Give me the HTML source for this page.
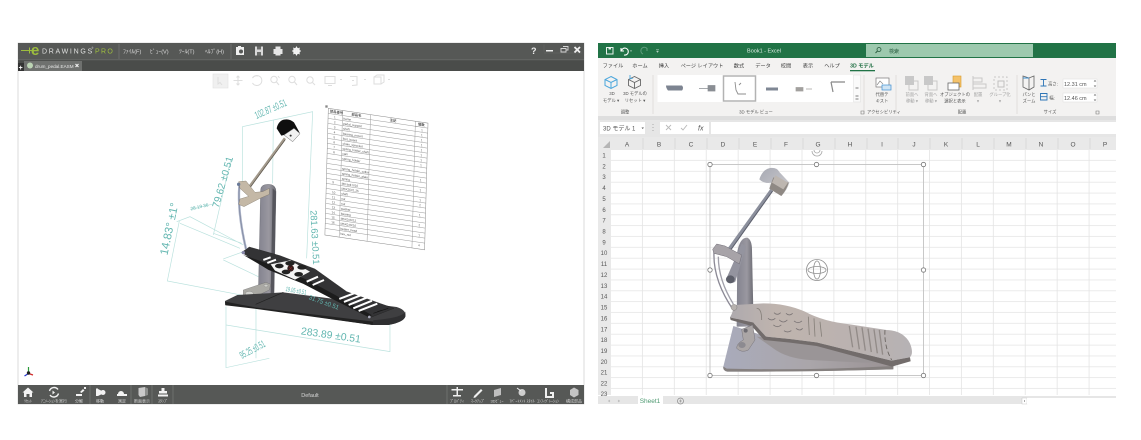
<!DOCTYPE html>
<html lang="ja"><head><meta charset="utf-8"><title>eDrawings and Excel</title>
<style>
html,body{margin:0;padding:0;background:#fff;width:1141px;height:440px;overflow:hidden}
svg{display:block;filter:blur(.3px)}
text{font-family:"Liberation Sans","Noto Sans CJK JP",sans-serif}
</style></head><body>
<svg width="1141" height="440" viewBox="0 0 1141 440" xmlns="http://www.w3.org/2000/svg">
<defs>
<linearGradient id="pd" x1="0" y1="0" x2="1" y2="0"><stop offset="0" stop-color="#aeaaae"/><stop offset=".25" stop-color="#bfb4ae"/><stop offset=".7" stop-color="#bab2b0"/><stop offset="1" stop-color="#b6b2b4"/></linearGradient>
<linearGradient id="bs" x1="0" y1="0" x2="1" y2="0"><stop offset="0" stop-color="#a9abbb"/><stop offset=".5" stop-color="#aaa6aa"/><stop offset="1" stop-color="#9a9294"/></linearGradient>
<linearGradient id="post" x1="0" y1="0" x2="1" y2="0"><stop offset="0" stop-color="#83838f"/><stop offset=".6" stop-color="#9a98a0"/><stop offset="1" stop-color="#6a6a72"/></linearGradient>
<linearGradient id="head" x1="0" y1="0" x2="1" y2="1"><stop offset="0" stop-color="#a7a9b3"/><stop offset="1" stop-color="#d0cfd2"/></linearGradient>
<pattern id="grid" x="611" y="150" width="31.9" height="10.86" patternUnits="userSpaceOnUse"><rect width="31.9" height="10.86" fill="#fff"/><path d="M31.5 0V10.86M0 10.5H31.9" stroke="#e4e4e4" stroke-width=".8" fill="none"/></pattern>
</defs>
<rect width="1141" height="440" fill="#fff"/>

<!-- LEFT WINDOW -->
<rect x="18" y="43" width="566" height="361" fill="#fff" stroke="#c4c4c4" stroke-width=".6"/>
<rect x="18" y="43" width="566" height="17" fill="#565856"/>
<rect x="18" y="60" width="566" height="11" fill="#4a4c4a"/>
<rect x="18" y="59.5" width="566" height=".7" fill="#6d6f6d"/>
<path d="M21 50.5H32M29.5 47.5V53.5" stroke="#9dbd3e" stroke-width="1" fill="none"/>
<text x="31" y="55" font-size="15" fill="#9dbd3e" font-weight="bold">e</text>
<text x="42" y="53.5" font-size="7" fill="#dfe0df" letter-spacing="1.7">DRAWINGS</text>
<text x="91.500" y="49" font-size="2.500" fill="#dfe0df">®</text>
<text x="95" y="53.5" font-size="7" fill="#9dbd3e" letter-spacing="1.300">PRO</text>
<path d="M119 44V59M231 44V59" stroke="#727472" stroke-width=".8"/>
<g font-size="5.600" fill="#dcdcdc">
<text x="123" y="53.5">ﾌｧｲﾙ(F)</text><text x="150" y="53.5">ﾋﾞｭｰ(V)</text><text x="179" y="53.5">ﾂｰﾙ(T)</text><text x="205" y="53.5">ﾍﾙﾌﾟ(H)</text>
</g>
<path d="M236 47H244V55H236Z M238 46H241V48H238Z" fill="#f0f0f0"/><circle cx="241" cy="51.5" r="2" fill="#565856"/>
<path d="M255 46.5H263V55.5H255Z" fill="#d8d8d8"/><path d="M257 46.5H261V49.5H257ZM257 52H261V55.5H257Z" fill="#6b6d6b"/>
<path d="M275.5 46.5H280.5V49H282.5V54H280.5V55.5H275.5V54H273.5V49H275.5Z" fill="#e6e6e6"/>
<circle cx="296.5" cy="51" r="3.5" fill="#f2f2f2"/><circle cx="296.5" cy="51" r="1.4" fill="#565856"/>
<path d="M296.5 46.5V55.5M292 51H301M293.3 47.8L299.7 54.2M299.7 47.8L293.3 54.2" stroke="#f2f2f2" stroke-width="1"/>
<text x="531" y="54" font-size="9" font-weight="bold" fill="#eee">?</text>
<path d="M544 44.5V51.5M544 53H582" stroke="#6d6f6d" stroke-width=".4" fill="none"/>
<rect x="546" y="50" width="7" height="1.5" fill="#eee"/>
<path d="M561 48.5H566V52H561ZM563 46.5H568V50H566" fill="none" stroke="#d5d5d5" stroke-width=".9"/>
<path d="M574.5 47L580 52.5M580 47L574.5 52.5" stroke="#f0f0f0" stroke-width="1.8"/>
<rect x="18" y="63" width="6" height="8" fill="#333"/>
<text x="18.6" y="70" font-size="7" font-weight="bold" fill="#fff">+</text>
<rect x="24" y="61" width="58" height="10" fill="#6f716f"/>
<circle cx="30" cy="65.5" r="3" fill="#bcd4b4"/>
<text x="35" y="68" font-size="4.600" fill="#e8e8e8">drum_pedal.EASM</text>
<path d="M75.500 64L78.500 67M78.500 64L75.500 67" stroke="#f2f2f2" stroke-width="1.100"/>

<!-- view toolbar -->
<rect x="213" y="74" width="15" height="14" fill="#f0f0f0" stroke="#e2e2e2" stroke-width=".6"/>
<g fill="none" stroke="#dedede" stroke-width="1">
<path d="M218 77L218 84L220 82.5L222 85"/>
<path d="M238 76V85M233.500 80.500H242.500M236.500 77.500L238 76L239.500 77.500M236.500 83.500L238 85L239.500 83.500"/>
<path d="M252.500 78A5 5 0 1 1 252.500 83"/><path d="M258 76A5 5 0 0 0 252.500 78"/>
<circle cx="274" cy="79.500" r="3.200"/><path d="M276.500 82L279 85M278 76L279.500 78"/>
<circle cx="292" cy="79.500" r="3.200"/><path d="M294.500 82L297 85"/>
<circle cx="310" cy="80" r="3.200"/><path d="M312.500 82.500L315 85"/>
<path d="M325 76.500H335V83.500H325ZM328 85.500H332"/><path d="M340 79.500H342"/>
<path d="M350 76.500H357V85L352 85.500M352 80.500H354"/><path d="M364 79.500H366"/>
<path d="M374 77H381V84H374ZM374 77L377 75H384V82L381 84"/><path d="M388 79.500H390"/>
</g>

<!-- Left drawing in zoom coordinates -->
<g transform="translate(140 95) scale(.3333)">
 <g stroke="#b9e1dd" stroke-width="2" fill="none">
  <path d="M307 95L518 50L500 490M307 95V275M400 75L398 265"/>
  <path d="M258 635V690L750 770V680M258 690L258 818L388 790M348 640V790"/>
  <path d="M220 420L272 195M110 380L150 365L310 450M120 385L300 460M118 378L82 558L330 605M250 492L310 470M220 415L305 445M250 495L355 545"/>
  <path d="M150 343L228 325"/>
 </g>
 <path d="M362 285Q362 268 385 268Q408 268 408 290L402 600H355Z" fill="url(#post)" stroke="#55555c" stroke-width="1"/>
 <path d="M398 280L408 290L402 600H392Z" fill="#56565d"/>
 <path d="M310 585L378 562L392 568L388 585L335 610Q318 612 310 600Z" fill="#aaa9a4" stroke="#666" stroke-width="1"/>
 <ellipse cx="328" cy="596" rx="12" ry="7" fill="#d2d2ce" stroke="#777"/><ellipse cx="378" cy="572" rx="6" ry="4" fill="#cfcfca" stroke="#777"/>
 <path d="M255 618L292 600L430 592L770 636Q800 645 796 665Q790 682 745 690L698 690L350 640L256 630Z" fill="#3f3f41"/>
 <path d="M255 620L350 638L700 680L698 690L350 642L256 631Z" fill="#222"/>
 <path d="M700 676Q790 668 796 650V665Q790 682 745 690H698Z" fill="#2f2f31"/>
 <path d="M347 628L430 592" stroke="#222" stroke-width="2"/>
 <!-- footboard -->
 <path d="M305 472L328 456L420 482L525 522L620 590L762 640L690 668L590 618L490 566L385 524Z" fill="#333335" stroke="#1d1d1d" stroke-width="1"/>
 <path d="M310 480L385 524L490 566L590 618L690 668L695 660L600 608L505 556L400 512Z" fill="#1c1c1c"/>
 <g stroke="#fff" stroke-width="6" fill="none">
  <path d="M370 495L392 487M382 504L408 494M500 560L534 545M518 570L552 555"/>
  <path d="M598 612L650 592M612 621L665 600M626 630L680 608M640 640L696 617M656 648L712 626"/>
 </g>
 <path d="M392 508L450 496L510 530L465 554L405 527Z" fill="#f4f4f4"/>
 <g fill="#222"><ellipse cx="418" cy="513" rx="13" ry="7"/><ellipse cx="450" cy="505" rx="14" ry="7"/><ellipse cx="486" cy="517" rx="14" ry="7"/><ellipse cx="476" cy="538" rx="13" ry="7"/><ellipse cx="438" cy="531" rx="13" ry="7"/></g>
 <circle cx="452" cy="520" r="10" fill="#2e1c1c"/><path d="M446 514L458 526M458 514L446 526" stroke="#a22" stroke-width="1.500"/>
 <path d="M700 655L745 640M712 650L725 646" stroke="#151515" stroke-width="2"/>
 <circle cx="310" cy="473" r="5" fill="#88a"/><circle cx="688" cy="666" r="4" fill="#aab"/>
 <path d="M298 272Q292 350 318 462" stroke="#a9b1c6" stroke-width="7" fill="none"/><path d="M298 272Q292 350 318 462" stroke="#6f7690" stroke-width="1.500" fill="none"/>
 <path d="M325 280L435 130" stroke="#a39a8c" stroke-width="8"/><path d="M325 285L435 135" stroke="#5b554c" stroke-width="2"/>
 <path d="M296 260L318 258L345 292L368 290L388 280V298L360 310L312 335L296 328L300 312L326 304L300 280Z" fill="#c4b8a6" stroke="#6f6657" stroke-width="1"/>
 <circle cx="296" cy="268" r="5" fill="#6a7a98"/>
 <!-- beater -->
 <path d="M410 100Q415 78 432 74Q448 70 462 82L480 115L462 100L432 120L424 122Z" fill="#0f0f0f"/>
 <path d="M432 120L462 100L480 116L458 140Z" fill="#f2f2f2" stroke="#666" stroke-width="1.500"/>
 <circle cx="452" cy="122" r="3" fill="#333"/>
 <g fill="#62b6b0">
  <text transform="translate(350 72) rotate(-24) scale(.56 1)" font-size="31">102.87 ±0.51</text>
  <text transform="translate(236 340) rotate(-74)" font-size="30">79.62 ±0.51</text>
  <text transform="translate(82 482) rotate(-78)" font-size="34">14.83° ±1°</text>
  <text transform="translate(482 718) rotate(8)" font-size="31">283.89 ±0.51</text>
  <text transform="translate(306 792) rotate(-28) scale(.5 1)" font-size="31">95.25 ±0.51</text>
  <text transform="translate(511 346) rotate(87)" font-size="28">281.63 ±0.51</text>
  <text transform="translate(153 346) rotate(-13)" font-size="14">28.19 36</text>
  <text transform="translate(436 588) rotate(10) scale(.6 1)" font-size="20">19.05 ±0.51</text>
  <text transform="translate(505 612) rotate(20) scale(.9 1)" font-size="20">31.75 ±0.51</text>
 </g>
 <g transform="matrix(.997 .148 -.027 1 565 40)">
  <rect x="0" y="0" width="300" height="380" fill="#fff" stroke="#8b8b8b" stroke-width="1.500"/>
  <path d="M0 15H300M0 30H300M0 45H300M0 60H300M0 75H300M0 90H300M0 105H300M0 120H300M0 135H300M0 150H300M0 165H300M0 180H300M0 195H300M0 210H300M0 225H300M0 240H300M0 255H300M0 270H300M0 285H300M0 300H300M0 315H300M0 330H300M0 345H300M0 360H300M43 0V380M127 0V380M262 0V380" stroke="#9a9a9a" stroke-width="1.500" fill="none"/>
  <g font-size="9" fill="#555">
   <text x="5" y="11" font-size="10" font-weight="bold">部品番号</text><text x="70" y="11" font-size="10" font-weight="bold">部品名</text><text x="185" y="11" font-size="10" font-weight="bold">注記</text><text x="270" y="11" font-size="10" font-weight="bold">個数</text>
   <text x="46" y="27">frame</text><text x="46" y="42">pedal_support</text><text x="46" y="57">shaft</text><text x="46" y="72">bearing_mount</text><text x="46" y="87">foot_board</text><text x="46" y="102">chain_sprocket</text><text x="46" y="117">spring_holder_shaft</text><text x="46" y="132">cam</text><text x="46" y="147">spring_holder</text><text x="46" y="177">spring_holder_collar</text><text x="46" y="192">spring_holder_plate</text><text x="46" y="207">spring</text><text x="46" y="222">M6 bolt 5/16</text><text x="46" y="237">M6X25X1.25</text><text x="46" y="252">shaft</text><text x="46" y="267">nut</text><text x="46" y="282">nut</text><text x="46" y="297">washer</text><text x="46" y="312">bearing</text><text x="46" y="327">M5X0.8X12</text><text x="46" y="342">M5X0.8X16</text><text x="46" y="357">beater_head</text><text x="46" y="372">hex_nut</text>
   <text x="18" y="27">1</text><text x="18" y="42">2</text><text x="18" y="57">3</text><text x="18" y="72">4</text><text x="18" y="87">5</text><text x="18" y="102">6</text><text x="18" y="117">7</text><text x="18" y="132">8</text><text x="18" y="222">9</text><text x="18" y="252">10</text><text x="18" y="267">11</text><text x="18" y="282">12</text><text x="18" y="297">13</text><text x="18" y="312">14</text><text x="18" y="327">15</text><text x="18" y="342">16</text>
   <text x="280" y="27">1</text><text x="280" y="42">1</text><text x="280" y="57">1</text><text x="280" y="72">1</text><text x="280" y="87">1</text><text x="280" y="102">1</text><text x="280" y="117">1</text><text x="280" y="132">1</text><text x="280" y="177">1</text><text x="280" y="207">1</text><text x="280" y="237">1</text><text x="280" y="252">2</text><text x="280" y="282">1</text><text x="280" y="312">2</text><text x="280" y="342">1</text><text x="280" y="372">4</text>
  </g>
 </g>
 <rect x="556" y="31" width="7" height="7" fill="#888"/>
</g>

<path d="M28.500 373.500V367" stroke="#2a9a3a" stroke-width="1.200"/><path d="M28.500 373.500L24.500 376" stroke="#2233cc" stroke-width="1.200"/><path d="M28.500 373.500L33 375" stroke="#d02a2a" stroke-width="1.200"/><circle cx="28.500" cy="373" r="1.700" fill="#222"/>

<!-- bottom bar -->
<rect x="18" y="385" width="566" height="19" fill="#565856"/>
<path d="M90 385V404M131 385V404M152 385V404M173 385V404M447 385V404" stroke="#777977" stroke-width=".7"/>
<g fill="#f2f2f2">
 <path d="M28 387.500L33.500 392.500H32V397H29.500V394H26.500V397H24V392.500H22.500Z"/>
 <path d="M52.500 390.500L55 392.500L52.500 394.500Z"/>
 <path d="M76 394H82V396H76ZM80 392L83 389L84.500 390.500L81.500 393Z M84 387H86V389H84Z"/>
 <path d="M96 388.500H98V396H96ZM98 389L102 391V394L98 396Z"/><circle cx="103" cy="392.500" r="2.500"/>
 <path d="M117 396H127V394H124A3 3 0 1 0 118 394L117 394Z"/>
 <path d="M138.500 388L145 387V396L140 397L138.500 395Z" fill="#c9c9c9"/><path d="M145 387L148 388.500V395L145 396Z" fill="#8d8f8d"/>
 <path d="M161.500 388H164.500V391H167V393.500H159V391H161.500ZM158 394.500H168V396.500H158Z"/>
</g>
<g fill="none" stroke="#f2f2f2" stroke-width="1.400"><path d="M49.500 391A4.800 4.800 0 0 1 58 389.500M58.500 393.500A4.800 4.800 0 0 1 50 395"/></g>
<g font-size="4" fill="#d5d5d5" text-anchor="middle">
 <text x="28" y="402.500">ﾘｾｯﾄ</text><text x="54" y="402.500">ｱﾆﾒｰｼｮﾝを実行</text><text x="79" y="402.500">分解</text><text x="100" y="402.500">移動</text><text x="122" y="402.500">測定</text><text x="142" y="402.500">断面表示</text><text x="163" y="402.500">ｽﾀﾝﾌﾟ</text>
 <text x="457" y="402.500">ﾌﾟﾛﾊﾟﾃｨ</text><text x="478" y="402.500">ﾏｰｸｱｯﾌﾟ</text><text x="497" y="402.500">3Dﾋﾞｭｰ</text><text x="522" y="402.500">ｱﾊﾟｰﾄﾒﾝﾄ ｽﾀｲﾙ</text><text x="548" y="402.500">ｺﾝﾌｨｸﾞﾚｰｼｮﾝ</text><text x="574" y="402.500">構成部品</text>
</g>
<text x="310" y="397" font-size="5.500" fill="#d8d8d8" text-anchor="middle">Default</text>
<g fill="#f0f0f0">
 <path d="M456.500 387H458V389H463V390.500H458V395H461V396.500H453V395H456.500V390.500H451.500V389H456.500Z"/>
 <path d="M474 396L481 389L482.500 390.500L475.500 397.500L473.500 398Z"/>
 <path d="M494 390L501 388V395L494 397Z" fill="#bfbfbf"/>
 <circle cx="522" cy="392.500" r="3.500" fill="#cfcfcf"/><path d="M517 388L521 391" stroke="#f0f0f0"/>
 <path d="M545 388H547V396H552V394H550V392H554V398H545Z"/>
 <path d="M570 390L574 387.500L578.500 390V395L574 397.500L570 395Z" fill="#c4c4c4"/>
</g>

<!-- EXCEL -->
<rect x="598" y="43" width="518" height="361" fill="#fff"/>
<rect x="598" y="43" width="518" height="15" fill="#217346"/>
<rect x="866" y="44" width="167" height="13" fill="#9dc9ae"/>
<rect x="606.500" y="47.500" width="6.500" height="6.500" fill="none" stroke="#e8f1ec" stroke-width="1"/><rect x="608.500" y="47.500" width="2.500" height="2" fill="#e8f1ec"/>
<path d="M621 48V51H624M621.500 50.500A3.500 3.500 0 1 1 624 55" fill="none" stroke="#fff" stroke-width="1.100"/>
<path d="M630 50.500L632 50.500L631 51.800Z" fill="#dce8e1"/>
<path d="M647 48V51M647 48.500A3.500 3.500 0 1 0 643 54" fill="none" stroke="#5e9c7b" stroke-width="1"/>
<path d="M656 49.500H659M656.500 51L657.500 52.500L658.500 51Z" fill="#b8d3c4" stroke="#b8d3c4" stroke-width=".5"/>
<text x="764" y="52.500" font-size="5.500" fill="#dfece5" text-anchor="middle">Book1  -  Excel</text>
<circle cx="879" cy="49.500" r="2" fill="none" stroke="#2a5d40" stroke-width=".8"/><path d="M877.500 51L875.500 53" stroke="#2a5d40"/>
<text x="889" y="53" font-size="5" fill="#2a5d40">検索</text>
<rect x="598" y="58" width="518" height="58" fill="#f3f2f1"/>
<g font-size="5.200" fill="#444" text-anchor="middle">
 <text x="613" y="67.500">ファイル</text><text x="640" y="67.500">ホーム</text><text x="664" y="67.500">挿入</text><text x="702" y="67.500">ページ レイアウト</text><text x="739" y="67.500">数式</text><text x="763" y="67.500">データ</text><text x="786" y="67.500">校閲</text><text x="808" y="67.500">表示</text><text x="832" y="67.500">ヘルプ</text>
 <text x="862" y="67.500" font-weight="bold" fill="#1e6e42">3D モデル</text>
</g>
<rect x="850" y="70" width="25" height="1.300" fill="#217346"/>
<path d="M611 76.500L617 79.500V85.500L611 88.500L605 85.500V79.500ZM605 79.500L611 82.500L617 79.500M611 82.500V88.500" fill="none" stroke="#4aa6dc" stroke-width="1"/>
<path d="M634.500 76.500L640.500 79.500V85.500L634.500 88.500L628.500 85.500V79.500ZM628.500 79.500L634.500 82.500L640.500 79.500M634.500 82.500V88.500" fill="none" stroke="#666" stroke-width=".9"/>
<path d="M630 75L630 79L633 78" fill="none" stroke="#4aa6dc" stroke-width=".9"/>
<g font-size="4.300" fill="#555" text-anchor="middle">
 <text x="612" y="95">3D</text><text x="611" y="102">モデル ▾</text><text x="635" y="95">3D モデルの</text><text x="635" y="102">リセット ▾</text>
 <text x="625" y="113.500">調整</text><text x="756" y="113.500">3D モデル ビュー</text><text x="884" y="113.500">アクセシビリティ</text><text x="962" y="113.500">配置</text><text x="1050" y="113.500">サイズ</text>
 <text x="882" y="96">代替テ</text><text x="882" y="102.500">キスト</text>
 <text x="912" y="96" fill="#a3a3a3">前面へ</text><text x="912" y="102.500" fill="#a3a3a3">移動 ▾</text>
 <text x="931" y="96" fill="#a3a3a3">背面へ</text><text x="931" y="102.500" fill="#a3a3a3">移動 ▾</text>
 <text x="955" y="96">オブジェクトの</text><text x="955" y="102.500">選択と表示</text>
 <text x="978" y="96" fill="#a3a3a3">配置</text><text x="978" y="102.500" fill="#a3a3a3">▾</text>
 <text x="1000" y="96" fill="#a3a3a3">グループ化</text><text x="1000" y="102.500" fill="#a3a3a3">▾</text>
 <text x="1029" y="96">パンと</text><text x="1029" y="102.500">ズーム</text>
 <text x="1053" y="85.500">高さ:</text><text x="1052" y="99.500">幅:</text>
</g>
<path d="M653 75V114M864 75V114M896 75V114M1017 75V114" stroke="#dcdad8" stroke-width=".8"/>
<rect x="657.500" y="75" width="196" height="27" fill="#fff"/>
<rect x="723.500" y="76" width="32" height="25" fill="#fff" stroke="#b3b3b3" stroke-width="1.500"/>
<path d="M666 85.500H682Q684 88 682 90.500H668Q666 88 666 85.500Z" fill="#7d8491"/>
<path d="M699 88.500H712M708 85.500H715V91H708Z" fill="#8a8e94" stroke="#8a8e94" stroke-width=".7"/>
<path d="M735 82L736 90L738 94H746M739 85L741 83" fill="none" stroke="#8c8c8c" stroke-width=".9"/>
<path d="M766 87.500H778V90.500H766Z" fill="#7f8794"/>
<path d="M796 87.500H803V91H796ZM806 89H812" fill="#a2a09e" stroke="#a2a09e" stroke-width=".7"/>
<path d="M831 82H845M831 82L833 92" fill="none" stroke="#888" stroke-width="1.200"/>
<rect x="853.500" y="75" width="7" height="27" fill="#fafafa" stroke="#ddd" stroke-width=".5"/>
<path d="M855.500 88H858.500M855.500 96H858.500M855.500 99H858.500" stroke="#555" stroke-width=".8"/>
<rect x="876" y="78" width="13" height="9" fill="#fff" stroke="#777" stroke-width=".7"/><rect x="882" y="85" width="9" height="5" fill="#cfe4f4" stroke="#3f8fd0" stroke-width=".7"/>
<path d="M877 85L880 81L883 84" fill="none" stroke="#888" stroke-width=".7"/>
<rect x="905" y="76" width="9" height="9" fill="#c8c8c8"/><rect x="909" y="81" width="9" height="9" fill="none" stroke="#c8c8c8"/>
<rect x="924" y="76" width="9" height="9" fill="#c8c8c8"/><rect x="928" y="81" width="9" height="9" fill="none" stroke="#c8c8c8"/>
<rect x="953" y="76" width="8" height="11" fill="#f4c26a" stroke="#d89a2c" stroke-width=".6"/><rect x="948" y="83" width="11" height="7" fill="#fff" stroke="#666" stroke-width=".8"/>
<path d="M973 76V90M973 78H982V82H973M973 84H986V88H973" fill="none" stroke="#c8c8c8"/>
<rect x="994" y="77" width="13" height="13" fill="none" stroke="#c8c8c8" stroke-dasharray="2 2"/><rect x="998" y="81" width="6" height="6" fill="none" stroke="#c0c0c0"/>
<path d="M1023 76L1029 78L1034 76V87L1029 90L1023 87ZM1029 78V90" fill="none" stroke="#666" stroke-width=".8"/><path d="M1023 78H1029" stroke="#3b8fd0"/>
<path d="M1040.500 79.500H1046.500M1040.500 86H1046.500M1043.500 79.500V86" fill="none" stroke="#2e75b6" stroke-width=".9"/>
<path d="M1040.500 93.500H1047V100H1040.500ZM1040.500 96.700H1047" fill="none" stroke="#2e75b6" stroke-width=".9"/>
<rect x="1063" y="79" width="34" height="9" fill="#fff" stroke="#ddd" stroke-width=".5"/><rect x="1063" y="93" width="34" height="9" fill="#fff" stroke="#ddd" stroke-width=".5"/>
<text x="1064" y="86" font-size="5.500" fill="#555">12.31 cm</text><text x="1064" y="100" font-size="5.500" fill="#555">12.46 cm</text>
<path d="M1094 81.500L1095 80.500L1096 81.500M1094 85.500L1095 86.500L1096 85.500M1094 95.500L1095 94.500L1096 95.500M1094 99.500L1095 100.500L1096 99.500" fill="none" stroke="#555" stroke-width=".6"/>
<g fill="none" stroke="#777" stroke-width=".6"><path d="M861 111H864V114H861ZM1096 111H1099V114H1096Z"/></g>
<rect x="598" y="116" width="518" height="4" fill="#dedede"/>
<rect x="598" y="120" width="518" height="17" fill="#e6e6e6"/>
<rect x="600" y="122" width="45" height="12" fill="#fff"/><text x="603" y="130.500" font-size="6" fill="#555">3D モデル 1</text><path d="M641.500 127.500H644L642.700 129Z" fill="#555"/>
<path d="M653 124V125M653 127V128M653 130V131" stroke="#aaa"/>
<rect x="660" y="122" width="49" height="12" fill="#fff"/>
<path d="M666 125L671 130M671 125L666 130" stroke="#b9b9b9" stroke-width=".9"/><path d="M681 128L683 130L687 125" fill="none" stroke="#b9b9b9" stroke-width=".9"/>
<text x="698" y="130.500" font-size="7" fill="#555" font-style="italic">fx</text>
<rect x="711" y="122" width="405" height="12" fill="#fff"/>
<rect x="598" y="137" width="518" height="13" fill="#e9e9e9"/>
<rect x="598" y="150" width="13" height="245" fill="#e9e9e9"/>
<rect x="611" y="150" width="505" height="245" fill="url(#grid)"/>
<path d="M603 148H610V141Z" fill="#b5b5b5"/>
<path d="M643 138V149M675 138V149M707 138V149M739 138V149M771 138V149M803 138V149M835 138V149M867 138V149M898 138V149M930 138V149M962 138V149M994 138V149M1026 138V149M1058 138V149M1090 138V149" stroke="#d2d2d2" stroke-width=".7"/>
<g font-size="6.500" fill="#555" text-anchor="middle">
 <text x="627" y="146.500">A</text><text x="659" y="146.500">B</text><text x="691" y="146.500">C</text><text x="723" y="146.500">D</text><text x="755" y="146.500">E</text><text x="786" y="146.500">F</text><text x="818" y="146.500">G</text><text x="850" y="146.500">H</text><text x="882" y="146.500">I</text><text x="914" y="146.500">J</text><text x="946" y="146.500">K</text><text x="978" y="146.500">L</text><text x="1009" y="146.500">M</text><text x="1041" y="146.500">N</text><text x="1073" y="146.500">O</text><text x="1105" y="146.500">P</text>
</g>
<g font-size="6" fill="#555" text-anchor="middle">
 <text x="604" y="157.500">1</text><text x="604" y="168.300">2</text><text x="604" y="179.200">3</text><text x="604" y="190">4</text><text x="604" y="200.900">5</text><text x="604" y="211.800">6</text><text x="604" y="222.600">7</text><text x="604" y="233.500">8</text><text x="604" y="244.400">9</text><text x="604" y="255.200">10</text><text x="604" y="266.100">11</text><text x="604" y="277">12</text><text x="604" y="287.800">13</text><text x="604" y="298.700">14</text><text x="604" y="309.500">15</text><text x="604" y="320.400">16</text><text x="604" y="331.300">17</text><text x="604" y="342.100">18</text><text x="604" y="353">19</text><text x="604" y="363.900">20</text><text x="604" y="374.700">21</text><text x="604" y="385.600">22</text><text x="604" y="396">23</text>
</g>
<rect x="710" y="164.500" width="213.500" height="211" fill="none" stroke="#c3c3c3" stroke-width=".9"/>
<g fill="#fff" stroke="#777" stroke-width=".8">
 <circle cx="710" cy="164.500" r="2.200"/><circle cx="816.500" cy="164.500" r="2.200"/><circle cx="923.500" cy="164.500" r="2.200"/><circle cx="710" cy="270" r="2.200"/><circle cx="923.500" cy="270" r="2.200"/><circle cx="710" cy="375.500" r="2.200"/><circle cx="816.500" cy="375.500" r="2.200"/><circle cx="923.500" cy="375.500" r="2.200"/>
</g>
<path d="M812 151A5 5 0 0 0 822 151M814 150A3 3 0 0 0 820 150" fill="none" stroke="#a7a7a7" stroke-width=".8"/>
<g fill="none" stroke="#8f8f8f" stroke-width=".8"><circle cx="817" cy="270" r="10.500"/><ellipse cx="817" cy="270" rx="9" ry="3.500"/><ellipse cx="817" cy="270" rx="3.500" ry="9"/></g>

<!-- excel pedal zoom coords -->
<g transform="translate(690 140) scale(.3333)">
 <path d="M142 335Q150 292 172 293Q186 300 186 330L191 560H140Z" fill="url(#post)"/>
 <path d="M140 345L155 310L168 320L136 425Q122 436 108 418Z" fill="#94949f"/>
 <ellipse cx="121" cy="418" rx="13" ry="12" fill="#5d5f6a"/>
 <path d="M130 558L230 590L610 668V688Q360 696 112 695Q98 692 100 680Z" fill="url(#bs)"/>
 <path d="M100 680Q98 692 112 695Q360 696 610 688V678Q360 692 110 686Z" fill="#85807f"/>
 <path d="M200 590L300 600L380 610L480 635L600 668H520L360 660Q290 655 250 625Z" fill="#9a9597"/>
 <path d="M125 522L135 495L220 490Q290 490 345 515Q400 545 480 553L590 570Q640 572 660 610Q672 640 660 652L605 662L480 632L380 607L300 597L228 590L190 548L120 532Z" fill="url(#pd)"/>
 <path d="M120 532L190 548L228 590L300 597L380 607L480 632L605 662L660 652L662 664L606 680L480 645L380 618L300 608L222 600L185 558L122 540Z" fill="#726c6b"/>
 <path d="M478 558L488 622M498 560L508 628M516 562L526 632M534 566L544 636M552 568L562 640M568 570L578 644" stroke="#928b88" stroke-width="4" fill="none"/>
 <path d="M585 570Q582 620 605 660" stroke="#66605c" stroke-width="2.500" stroke-dasharray="14 8" fill="none"/>
 <path d="M200 505Q215 505 215 540M355 530L358 585M372 535L375 590M390 545L395 590" stroke="#86807a" stroke-width="2.500" fill="none"/>
 <g fill="none" stroke="#7c7676" stroke-width="2.500"><path d="M252 518Q262 528 272 518M288 520Q298 530 308 520M234 535Q245 545 256 535M268 540Q280 552 292 540M312 543Q324 553 336 543M250 555Q262 565 274 555M282 572Q292 580 304 572M318 565Q330 575 338 565"/></g>
 <path d="M155 568L188 555L195 600L175 630Q155 640 140 625Q140 610 160 600Z" fill="#aba6a6" stroke="#77747a" stroke-width="1.500"/>
 <ellipse cx="156" cy="615" rx="11" ry="9" fill="#8c8a90"/><ellipse cx="167" cy="572" rx="6" ry="6" fill="#6e6c72"/>
 <path d="M72 335Q68 420 130 510" fill="none" stroke="#8c8a96" stroke-width="4"/><path d="M85 350Q85 420 130 492" fill="none" stroke="#a1a0aa" stroke-width="4"/>
 <circle cx="132" cy="502" r="9" fill="#b6b1ae" stroke="#666"/>
 <path d="M112 335L245 150" stroke="#8b8f9c" stroke-width="10"/><path d="M115 340L248 153" stroke="#5c5f6c" stroke-width="3"/>
 <path d="M68 328L80 312L105 318L155 345L148 372L110 350L72 340Z" fill="#a7a3a8" stroke="#6f6c75" stroke-width="1.500"/>
 <path d="M208 118Q218 88 240 84Q262 82 268 96L298 128Q292 150 274 168L238 146L244 128Q222 132 208 118Z" fill="url(#head)"/>
 <path d="M250 112L296 128Q290 150 274 168L238 146Z" fill="#8f8984"/>
 <path d="M256 106L294 128L280 148L246 128Z" fill="#bdb6b0"/>
</g>

<rect x="598" y="396" width="518" height="8" fill="#e6e6e6"/>
<rect x="638" y="396" width="25" height="9" fill="#fff"/>
<text x="650" y="403" font-size="6.500" fill="#4f9a72" text-anchor="middle">Sheet1</text>
<path d="M610 400L608.500 401L610 402M618 400L619.500 401L618 402" fill="none" stroke="#aaa" stroke-width=".6"/>
<circle cx="680.500" cy="401" r="3" fill="none" stroke="#888" stroke-width=".7"/><path d="M679 401H682M680.500 399.500V402.500" stroke="#888" stroke-width=".6"/>
<rect x="1022" y="398" width="5" height="6" fill="#fff" stroke="#bbb" stroke-width=".4"/><path d="M1025 400L1024 401L1025 402Z" fill="#555"/>
<rect x="1027" y="398" width="89" height="6" fill="#fff"/>
</svg>
</body></html>
